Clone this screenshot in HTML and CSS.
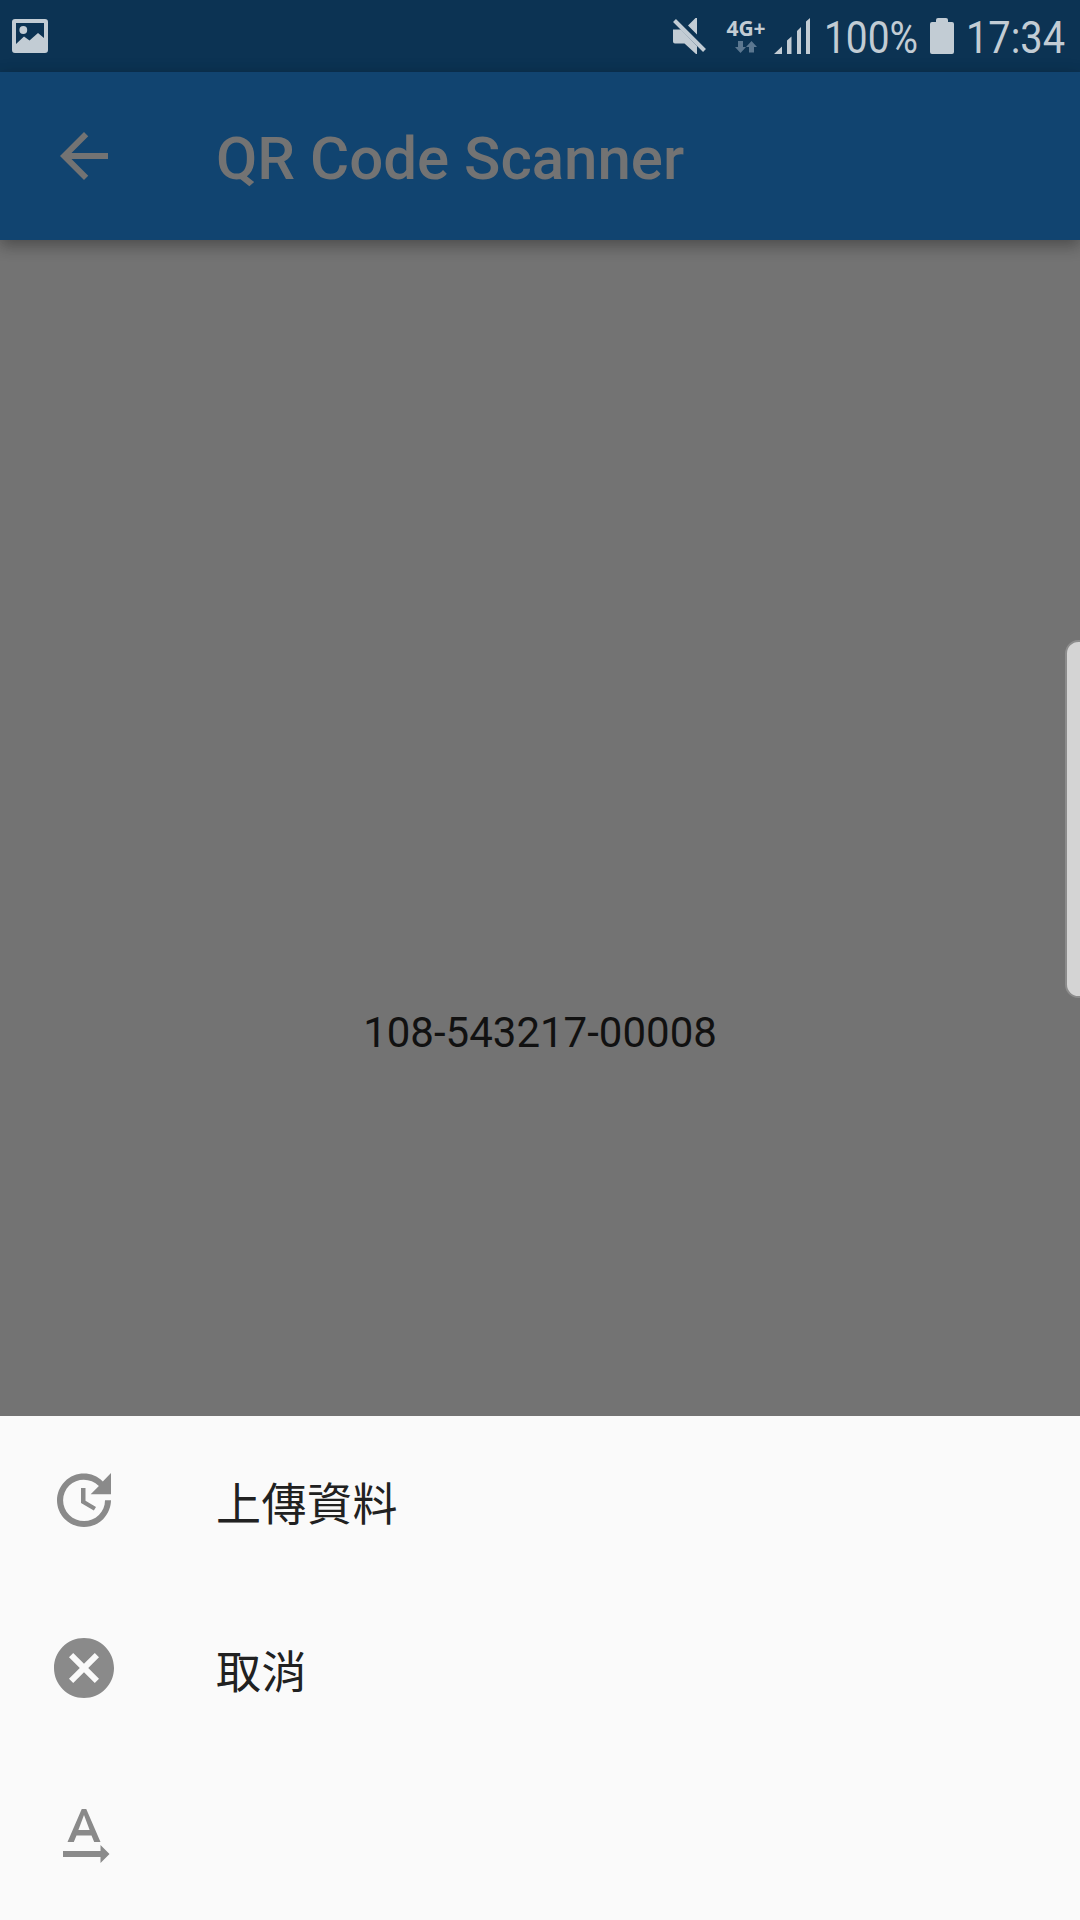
FILE: index.html
```html
<!DOCTYPE html>
<html lang="zh-Hant">
<head>
    <meta charset="UTF-8">
    <meta name="viewport" content="width=device-width, initial-scale=1.0">
    <title>QR Code Scanner</title>
    <link rel="stylesheet" href="styles.css">
</head>
<body>
    <div class="screen">
        <div class="status-bar">
            <svg class="status-picture" width="36" height="34" viewBox="0 0 36 34">
                <path fill-rule="evenodd" d="M3 0h30q3 0 3 3v28q0 3-3 3H3q-3 0-3-3V3q0-3 3-3zM4 4v21l8-7.500 5.500 4L26 14l6 5V4z"/>
                <circle cx="11.300" cy="11" r="3.900"/>
            </svg>
            <div class="status-right">
                <svg class="mute" width="34" height="36" viewBox="0 0 34 36">
                    <path d="M0 11.500h8L24 28v8h-1L11.500 25.500H2q-2 0-2-2zM24 0v16.500L15 7.500 22.500 0z"/>
                    <path class="slash" d="M1.500 2.500l30 30"/>
                </svg>
                <div class="network">
                    <span>4G+</span>
                    <svg width="22" height="12" viewBox="0 0 22 12">
                        <path d="M3 0h5v6h3l-5.500 6L0 6h3zM14 11.500h5V6h3l-5.500-6L11 6h3z"/>
                    </svg>
                </div>
                <svg class="signal" width="37" height="36" viewBox="0 0 37 36">
                    <path d="M0 36l8-7.500V36zM13 22.500l4.500-4V36H13zM23 13l4-4v27h-4zM32 3.500L36 0v36h-4z"/>
                </svg>
                <svg class="percent" width="98" height="72">
                    <text x="0" y="53" textLength="94" lengthAdjust="spacingAndGlyphs">100%</text>
                </svg>
                <svg class="battery" width="24" height="36" viewBox="0 0 24 36">
                    <path d="M6 4V2q0-2 2-2h8q2 0 2 2v2h4q2 0 2 2v28q0 2-2 2H2q-2 0-2-2V6q0-2 2-2z"/>
                </svg>
                <svg class="clock" width="102" height="72">
                    <text x="0" y="53" textLength="99" lengthAdjust="spacingAndGlyphs">17:34</text>
                </svg>
            </div>
        </div>
        <header class="app-bar">
            <svg class="icon" viewBox="0 0 24 24"><path d="M20 11H7.830l5.590-5.590L12 4l-8 8 8 8 1.410-1.410L7.830 13H20v-2z"/></svg>
            <h1 class="title">QR Code Scanner</h1>
        </header>
        <main class="content">
            <p class="code">108-543217-00008</p>
        </main>
        <div class="sheet">
            <div class="item">
                <svg class="icon" viewBox="0 0 24 24"><path d="M21 10.120h-6.780l2.740-2.820c-2.730-2.700-7.150-2.800-9.880-.1-2.730 2.710-2.730 7.080 0 9.790s7.150 2.710 9.880 0C18.320 15.650 19 14.080 19 12.100h2c0 1.980-.88 4.550-2.640 6.290-3.510 3.480-9.210 3.480-12.720 0-3.500-3.470-3.530-9.110-.02-12.580s9.140-3.470 12.650 0L21 3v7.120zM12.500 8v4.250l3.500 2.080-.72 1.210L11 13V8h1.500z"/></svg>
                <span class="label">上傳資料</span>
            </div>
            <div class="item">
                <svg class="icon" viewBox="0 0 24 24"><path d="M12 2C6.470 2 2 6.470 2 12s4.470 10 10 10 10-4.470 10-10S17.530 2 12 2zm5 13.590L15.590 17 12 13.410 8.410 17 7 15.590 10.590 12 7 8.410 8.410 7 12 10.590 15.590 7 17 8.410 13.410 12 17 15.590z"/></svg>
                <span class="label">取消</span>
            </div>
            <div class="item">
                <svg class="icon" viewBox="0 0 24 24"><path d="M20.500 18l-3-3v2H5v2h12.500v2l3-3zM9.500 11.800h5l.9 2.200h2.100L12.750 3h-1.500L6.500 14h2.100l.9-2.200zM12 4.980L13.870 10h-3.740L12 4.980z"/></svg>
            </div>
        </div>
        <div class="edge-handle"></div>
    </div>
</body>
</html>
```

FILE: styles.css
```css
* {
    box-sizing: border-box;
}
body {
    margin: 0;
    font-family: Roboto, "Noto Sans CJK TC", sans-serif;
}
.screen {
    position: relative;
    display: flex;
    flex-direction: column;
    width: 1080px;
    height: 1920px;
    overflow: hidden;
    background-color: #737373;
}
svg {
    display: block;
    flex: none;
    overflow: visible;
}
.status-bar {
    display: flex;
    justify-content: space-between;
    align-items: center;
    height: 72px;
    padding: 0 12px;
    background-color: #0c3353;
    fill: #c2ccd4;
}
.status-right {
    display: flex;
    align-items: center;
    height: 72px;
}
.status-right text {
    font-size: 45px;
}
.mute {
    margin-right: 20px;
}
.slash {
    fill: none;
    stroke: #c2ccd4;
    stroke-width: 4;
}
.network {
    display: flex;
    flex-direction: column;
    align-items: center;
    width: 38px;
    margin-right: 9px;
    color: #c2ccd4;
    font: bold 21px/20px "Open Sans", sans-serif;
}
.network span {
    margin-top: -2px;
}
.network svg {
    margin-top: 3px;
    fill: #5b7790;
}
.signal {
    margin-right: 13px;
}
.percent {
    margin-right: 8px;
}
.battery {
    margin-right: 12px;
}
.app-bar {
    display: flex;
    align-items: center;
    gap: 96px;
    height: 168px;
    padding: 0 48px;
    background-color: #114470;
    box-shadow: 0 6px 14px rgba(0, 0, 0, 0.25), 0 3px 18px rgba(0, 0, 0, 0.12);
    fill: #737373;
}
.icon {
    width: 72px;
    height: 72px;
}
.title {
    margin: 4px 0 0;
    color: #737373;
    font-size: 60px;
    font-weight: 500;
}
.content {
    flex: 1;
    padding-top: 768px;
    text-align: center;
}
.code {
    margin: 0;
    color: #111;
    font-size: 42px;
    line-height: 49px;
}
.sheet {
    height: 504px;
    background-color: #fafafa;
    fill: #8a8a8a;
}
.item {
    display: flex;
    align-items: center;
    gap: 96px;
    height: 168px;
    padding: 0 48px;
}
.label {
    padding-top: 12px;
    color: #212121;
    font-size: 45px;
    line-height: 60px;
    letter-spacing: 0.5px;
}
.edge-handle {
    position: absolute;
    top: 640px;
    right: -12px;
    width: 27px;
    height: 358px;
    border: 2px solid #8c8c8c;
    border-radius: 18px;
    background-color: #d4d4d4;
}
```
